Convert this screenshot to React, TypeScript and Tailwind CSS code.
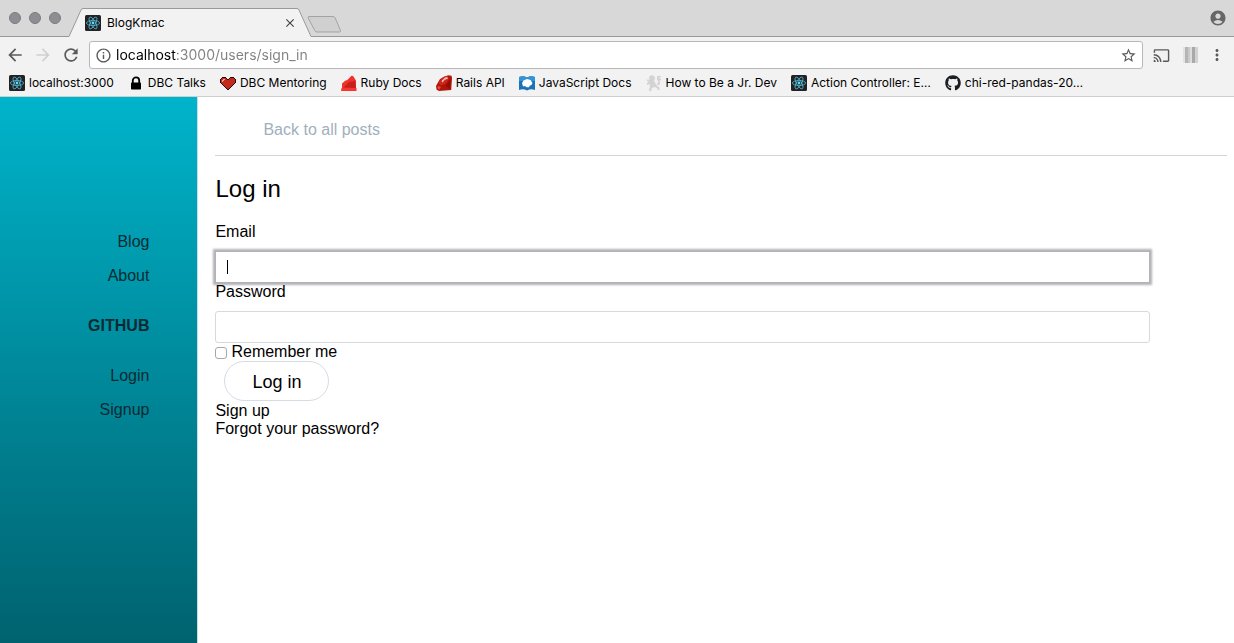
import type { ReactNode } from "react";
import {
  MdAccountCircle,
  MdArrowBack,
  MdArrowForward,
  MdCast,
  MdClose,
  MdInfoOutline,
  MdMoreVert,
  MdRefresh,
  MdStarBorder,
} from "react-icons/md";
import { FaGithub } from "react-icons/fa";

function ReactIcon() {
  return (
    <svg viewBox="0 0 16 16" className="size-4 shrink-0" aria-hidden="true">
      <rect width="16" height="16" rx="1.5" fill="#222222" />
      <g fill="none" stroke="#53b9d8" strokeWidth="0.8">
        <ellipse cx="8" cy="8" rx="6.6" ry="2.5" />
        <ellipse cx="8" cy="8" rx="6.6" ry="2.5" transform="rotate(60 8 8)" />
        <ellipse cx="8" cy="8" rx="6.6" ry="2.5" transform="rotate(120 8 8)" />
      </g>
      <circle cx="8" cy="8" r="1.4" fill="#61dafb" />
    </svg>
  );
}

function LockIcon() {
  return (
    <svg viewBox="0 0 16 16" className="size-4 shrink-0" aria-hidden="true">
      <path d="M4.800 8V5.600a3.200 3.200 0 0 1 6.400 0V8" fill="none" stroke="#000" strokeWidth="1.800" />
      <rect x="3" y="7.500" width="10" height="7" rx="0.800" fill="#000" />
    </svg>
  );
}

function HeartIcon() {
  return (
    <svg viewBox="0 0 16 16" className="size-4 shrink-0" shapeRendering="crispEdges" aria-hidden="true">
      <path d="M2 2h4v1h1v1h2V3h1V2h4v1h1v1h1v4h-1v1h-1v1h-1v1h-1v1h-1v1h-1v1H9v1H7v-1H6v-1H5v-1H4v-1H3v-1H2V9H1V8H0V4h1V3h1z" fill="#2a0a08" />
      <path d="M2 3h4v1h1v1h2V4h1V3h4v1h1v4h-1v1h-1v1h-1v1h-1v1h-1v1H9v1H7v-1H6v-1H5v-1H4v-1H3V9H2V8H1V4h1z" fill="#c32a1c" />
      <path d="M3 4h2v1H4v1H3v1H2V5h1z" fill="#f3a08f" />
    </svg>
  );
}

function RubyDocsIcon() {
  return (
    <svg viewBox="0 0 16 16" className="size-4 shrink-0" aria-hidden="true">
      <path d="M1 8.500 4.500 5.500l1.500-.3L10.500.8l1.500.2 3 4.500V16H1z" fill="#f0302b" />
      <path d="M2.500 12.500 8 7l6-1 1 7z" fill="#c81f1f" />
      <path d="M.5 13h15v3H0z" fill="#f5382f" />
    </svg>
  );
}

function RailsIcon() {
  return (
    <svg viewBox="0 0 16 16" className="size-4 shrink-0" aria-hidden="true">
      <path d="M12 .3 15.500.8 16 3l-.8 12L3 15.900.5 14.500 0 11 4 4z" fill="#b11409" />
      <path d="M4.500 4.500C7 1.500 10 .3 11.800 1.500c1.500 1.200.6 4-1.600 6.200C8 10 4.800 11 3.600 9.600 2.700 8.400 3 6.300 4.500 4.500z" fill="#c9281a" />
      <path d="M5.500 6 9 2.500l2.500-.3.300 1.500-3 1L6.500 7.500z" fill="#f3c0b8" />
      <path d="m2 11 3 .8-1.500 3L1.200 13z" fill="#e04a38" />
      <path d="m14.500 4-.3 10L9.500 11z" fill="#8f0e06" />
    </svg>
  );
}

function JavaScriptDocsIcon() {
  return (
    <svg viewBox="0 0 16 16" className="size-4 shrink-0" aria-hidden="true">
      <path d="M0 2c3-1 5-1 8 .6C11 1 13 1 16 2v13c-3-1-5-1-8 .4C5 14 3 14 0 15z" fill="#1a72ba" />
      <path d="M0 2c3-1 5-1 8 .6C11 1 13 1 16 2v4H0z" fill="#3593d3" />
      <path d="M4 11.500 3 8l1.500-2.500L8 4l3.500 1 2 3-1 2-1.500.5-1 1.700H7.500L6 11z" fill="#fff" />
    </svg>
  );
}

function LionIcon() {
  return (
    <svg viewBox="0 0 16 16" className="size-4 shrink-0" aria-hidden="true">
      <g fill="#d3d3d3">
        <path d="M3 1.500 6 0l2.500 1.500L9 4 8 5.500l1.500 3L11 11l2.500 1.500V15h-2v-1.500L9 12l-2 .5-1.500 1V16H3v-1.500l1-2.500-.5-3-2.500 1V8l2-1.500L1 6V4.500l2.500.3z" />
        <path d="M11 1h4v1.200h-2.500L15 4v1.500h-2l1 1.500v2l-2 1.500-1.500-1.500 2-1L11 4z" />
      </g>
    </svg>
  );
}

const bookmarks: { label: string; icon: ReactNode }[] = [
  { label: "localhost:3000", icon: <ReactIcon /> },
  { label: "DBC Talks", icon: <LockIcon /> },
  { label: "DBC Mentoring", icon: <HeartIcon /> },
  { label: "Ruby Docs", icon: <RubyDocsIcon /> },
  { label: "Rails API", icon: <RailsIcon /> },
  { label: "JavaScript Docs", icon: <JavaScriptDocsIcon /> },
  { label: "How to Be a Jr. Dev", icon: <LionIcon /> },
  { label: "Action Controller: E…", icon: <ReactIcon /> },
  { label: "chi-red-pandas-20…", icon: <FaGithub className="size-4 shrink-0 text-[#1b1f23]" /> },
];

function TabStrip() {
  return (
    <div className="flex h-[37px] items-end border-b border-[#999999] bg-[#d9d8d8]">
      <div className="flex items-center gap-2 self-center pl-[9px]">
        <button aria-label="Close window" className="size-3 rounded-full border border-[#7c7b80] bg-[#8e8d92]" />
        <button aria-label="Minimize window" className="size-3 rounded-full border border-[#7c7b80] bg-[#8e8d92]" />
        <button aria-label="Zoom window" className="size-3 rounded-full border border-[#7c7b80] bg-[#8e8d92]" />
      </div>
      <div className="-mb-px ml-2 flex h-[29px]">
        <svg viewBox="0 0 14 29" className="h-full w-[14px]" aria-hidden="true">
          <path d="M0 29V28.500L12 2Q12.600.5 14 .5V29z" fill="#f2f2f2" />
          <path d="M0 28.500 12 2Q12.600.5 14 .5" fill="none" stroke="#999999" />
        </svg>
        <div className="flex w-[214px] items-center gap-1.5 border-t border-[#999999] bg-[#f2f2f2] pl-0.5">
          <ReactIcon />
          <span className="flex-1 font-[Inter,sans-serif] text-xs text-black">BlogKmac</span>
          <button aria-label="Close tab" className="text-[#444444]">
            <MdClose className="size-[14px]" />
          </button>
        </div>
        <svg viewBox="0 0 14 29" className="h-full w-[14px]" aria-hidden="true">
          <path d="M14 29V28.500L2 2Q1.400.5 0 .5V29z" fill="#f2f2f2" />
          <path d="M14 28.500 2 2Q1.400.5 0 .5" fill="none" stroke="#999999" />
        </svg>
      </div>
      <button aria-label="New tab" className="-ml-1 mb-[3px]">
        <svg viewBox="0 0 35 18" className="h-[18px] w-[35px]">
          <path
            d="M2 1.500H26Q27.500 1.500 28.200 3L33.500 15.500Q34 17 32.500 17H10Q8.500 17 7.800 15.500L1.200 3Q.8 1.500 2 1.500z"
            fill="#d0d0d0"
            stroke="#a3a3a3"
          />
        </svg>
      </button>
      <button aria-label="Profile" className="ml-auto self-center pr-[7px] text-[#666666]">
        <MdAccountCircle className="size-[18px]" />
      </button>
    </div>
  );
}

function Toolbar() {
  return (
    <div className="flex h-9 items-center bg-[#f2f2f2] pr-2 pl-[5px] text-[#5a5a5a]">
      <button aria-label="Back" className="mr-2">
        <MdArrowBack className="size-5" />
      </button>
      <button aria-label="Forward" className="mr-2 text-[#d0d0d0]">
        <MdArrowForward className="size-5" />
      </button>
      <button aria-label="Reload" className="mr-2">
        <MdRefresh className="size-5" />
      </button>
      <div className="flex h-7 flex-1 items-center gap-1 rounded-[3px] border border-[#b8b8b8] bg-white px-[5px]">
        <MdInfoOutline className="size-[17px]" />
        <input
          aria-label="Address"
          defaultValue="localhost:3000/users/sign_in"
          className="min-w-0 flex-1 bg-[linear-gradient(to_right,#000_60px,#808080_60px)] bg-clip-text font-[Inter,sans-serif] text-sm text-transparent outline-none"
        />
        <button aria-label="Bookmark this page">
          <MdStarBorder className="size-[17px]" />
        </button>
      </div>
      <button aria-label="Cast" className="ml-2.5">
        <MdCast className="size-[17px]" />
      </button>
      <button aria-label="Extension" className="ml-[13px] flex h-4 w-[15px]">
        <span className="h-full w-0.5 bg-[#e3e3e3]" />
        <span className="h-full w-[3px] bg-[#b5b5b5]" />
        <span className="h-full w-0.5 bg-[#c9c9c9]" />
        <span className="h-full w-0.5 bg-[#dddddd]" />
        <span className="h-full w-[3px] bg-[#a9a9a9]" />
        <span className="h-full w-[3px] bg-[#d2d2d2]" />
      </button>
      <button aria-label="Menu" className="ml-2.5">
        <MdMoreVert className="size-[18px]" />
      </button>
    </div>
  );
}

function BookmarksBar() {
  return (
    <nav
      aria-label="Bookmarks"
      className="flex h-6 items-center gap-[14px] overflow-hidden border-b border-[#cfcfcf] bg-[#f2f2f2] pb-1 pl-[9px] font-[Inter,sans-serif] text-xs text-black"
    >
      {bookmarks.map((bookmark) => (
        <a key={bookmark.label} href="#" className="flex shrink-0 items-center gap-1 whitespace-nowrap">
          {bookmark.icon}
          {bookmark.label}
        </a>
      ))}
    </nav>
  );
}

function Sidebar() {
  return (
    <aside className="w-[16%] shrink-0 bg-linear-to-b from-[#00b4cb] to-[#00626f] pt-[136px] pr-12 text-right text-[#0b2b33]">
      <nav className="flex flex-col gap-8">
        <div className="flex flex-col gap-4">
          <a href="#">Blog</a>
          <a href="#">About</a>
        </div>
        <a href="#" className="font-bold">
          GITHUB
        </a>
        <div className="flex flex-col gap-4">
          <a href="#">Login</a>
          <a href="#">Signup</a>
        </div>
      </nav>
    </aside>
  );
}

function LoginPage() {
  return (
    <main className="flex-1 border-l border-[#c5dfe3] pr-[7px] pl-[17px] text-black">
      <header className="border-b border-[#d5d5d8] pt-5 pb-3 pl-12">
        <a href="#" className="block py-1 text-[#9fb0bb]">
          Back to all posts
        </a>
      </header>
      <h1 className="mt-[19px] text-2xl leading-7">Log in</h1>
      <form className="mt-5" onSubmit={(event) => event.preventDefault()}>
        <label htmlFor="email" className="block">
          Email
        </label>
        <div className="relative mt-2.5 w-[92.4%]">
          <input
            id="email"
            type="email"
            autoFocus
            className="block h-8 w-full border border-[#b2b2b8] px-3 caret-transparent shadow-[0_0_2px_2px_#b2b2b8] outline-none"
          />
          <span className="absolute top-[9px] left-3 h-[14px] w-px bg-black" />
        </div>
        <label htmlFor="password" className="relative block">
          Password
        </label>
        <input
          id="password"
          type="password"
          className="mt-2.5 block h-8 w-[92.4%] rounded-[3px] border border-[#d5dadf] px-3 outline-none"
        />
        <div className="flex items-center gap-1">
          <input
            id="remember"
            type="checkbox"
            className="mt-0.5 size-3 appearance-none rounded-[3px] border border-[#a8a8a8] bg-white checked:bg-[#4a90e2]"
          />
          <label htmlFor="remember">Remember me</label>
        </div>
        <button className="mb-px ml-[9px] block h-10 rounded-full border border-[#d5dce2] px-[27px] pt-0.5 text-lg">
          Log in
        </button>
      </form>
      <a href="#" className="block w-fit">
        Sign up
      </a>
      <a href="#" className="block w-fit">
        Forgot your password?
      </a>
    </main>
  );
}

export default function App() {
  return (
    <div className="flex min-h-screen flex-col bg-white">
      <header>
        <TabStrip />
        <Toolbar />
        <BookmarksBar />
      </header>
      <div className="flex flex-1 font-['Liberation_Sans',Arial,sans-serif] text-base leading-[18px]">
        <Sidebar />
        <LoginPage />
      </div>
    </div>
  );
}
